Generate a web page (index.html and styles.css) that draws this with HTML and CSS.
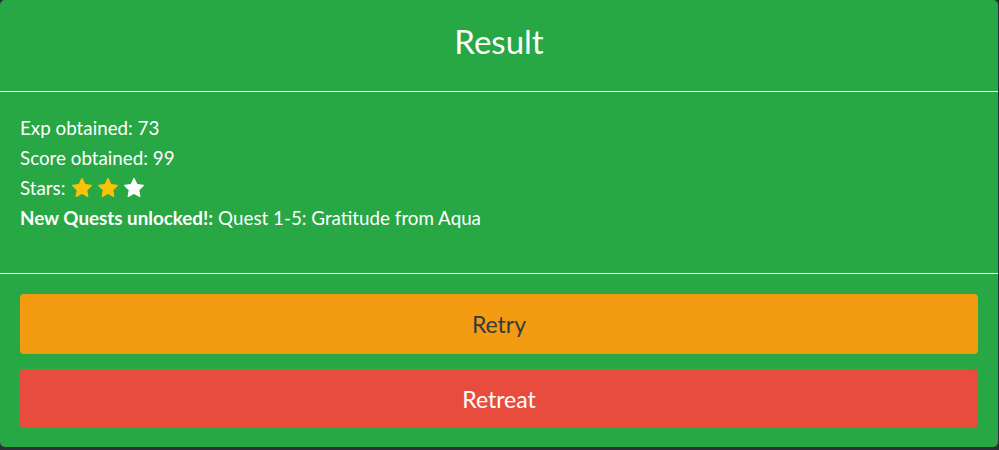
FILE: index.html
```html
<!DOCTYPE html>
<html>
<head>
<meta charset="utf-8">
<link rel="stylesheet" href="styles.css">
</head>
<body>
<div class="modal">
  <div class="modal-header">
    <h2 class="title">Result</h2>
  </div>
  <div class="modal-body">
    <div class="line">Exp obtained: 73</div>
    <div class="line">Score obtained: 99</div>
    <div class="line">Stars:
      <span class="stars">
        <svg class="star" viewBox="0 0 24 24"><path fill="#ffc107" d="M12 1.8l3.1 6.5 7 .9-5.1 4.9 1.3 7L12 17.7l-6.3 3.4 1.3-7L1.9 9.2l7-.9z" stroke="#ffc107" stroke-width="1.4" stroke-linejoin="round"/></svg>
        <svg class="star" viewBox="0 0 24 24"><path fill="#ffc107" d="M12 1.8l3.1 6.5 7 .9-5.1 4.9 1.3 7L12 17.7l-6.3 3.4 1.3-7L1.9 9.2l7-.9z" stroke="#ffc107" stroke-width="1.4" stroke-linejoin="round"/></svg>
        <svg class="star" viewBox="0 0 24 24"><path fill="#ffffff" d="M12 1.8l3.1 6.5 7 .9-5.1 4.9 1.3 7L12 17.7l-6.3 3.4 1.3-7L1.9 9.2l7-.9z" stroke="#ffffff" stroke-width="1.4" stroke-linejoin="round"/></svg>
      </span>
    </div>
    <div class="line"><b>New Quests unlocked!:</b> Quest 1-5: Gratitude from Aqua</div>
  </div>
  <div class="modal-footer">
    <button class="btn btn-warning">Retry</button>
    <button class="btn btn-danger">Retreat</button>
  </div>
</div>
</body>
</html>
```
FILE: styles.css
```css
html, body {
  margin: 0;
  padding: 0;
  background: #2b3035;
  width: 999px;
  height: 450px;
  overflow: hidden;
}
.modal {
  width: 998px;
  height: 447px;
  background: #28a745;
  border-radius: 5px;
  color: #fff;
  font-family: Lato, "Open Sans", sans-serif;
  display: flex;
  flex-direction: column;
  box-sizing: border-box;
}
.modal-header {
  border-bottom: 1px solid #fff;
  display: flex;
  align-items: center;
  justify-content: center;
  padding-bottom: 10px;
  height: 81px;
}
.title {
  margin: 0;
  font-weight: 400;
  font-size: 33px;
}
.modal-body {
  height: 182px;
  border-bottom: 1px solid #fff;
  padding: 21px 20px 0;
  box-sizing: border-box;
  font-size: 18.8px;
}
.line {
  height: 30px;
  line-height: 30px;
  display: flex;
  align-items: center;
  gap: 5px;
}
.line b { font-weight: 700; }
.stars {
  display: flex;
  gap: 4px;
  margin-left: 1px;
}
.star {
  width: 22px;
  height: 22px;
}
.modal-footer {
  padding: 20px 20px 0;
  display: flex;
  flex-direction: column;
  gap: 15px;
}
.btn {
  border: none;
  border-radius: 4px;
  height: 60px;
  font-family: Lato, "Open Sans", sans-serif;
  font-size: 23px;
  width: 958px;
  padding: 0;
}
.btn-warning { background: #f39c12; color: #343a40; }
.btn-danger { background: #e74c3c; color: #fff; height: 59px; }
```
